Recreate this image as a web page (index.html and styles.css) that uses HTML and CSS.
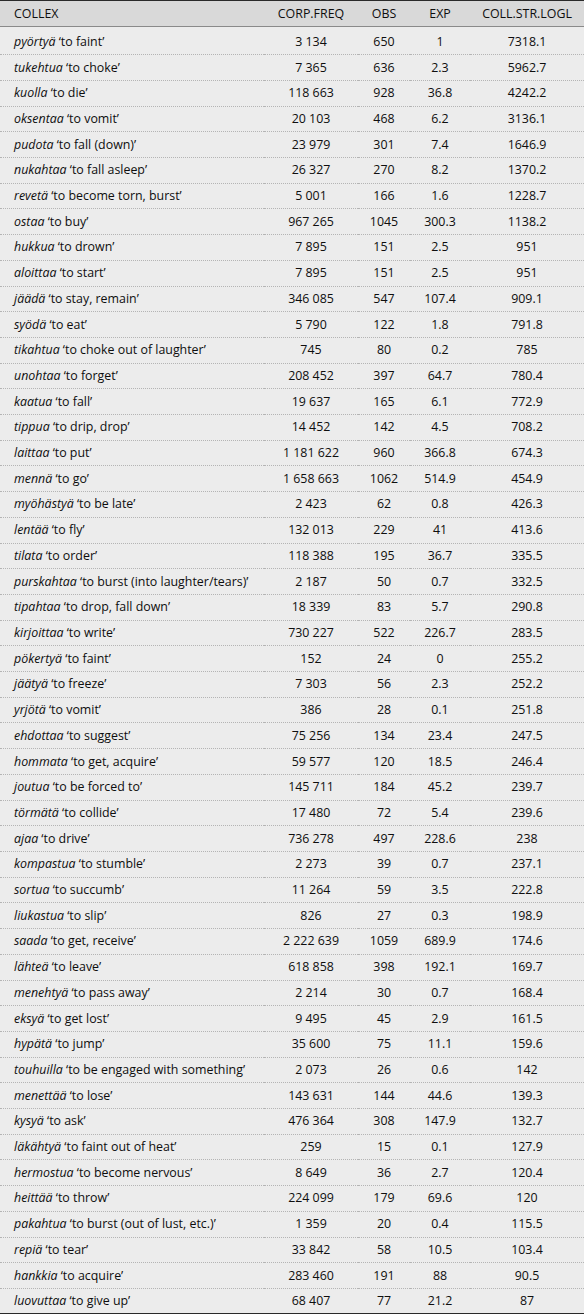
FILE: index.html
```html
<!DOCTYPE html>
<html lang="en">
<head>
<meta charset="utf-8">
<title>Collexemes</title>
<link rel="stylesheet" href="styles.css">
</head>
<body>
<table class="tbl">
<colgroup>
<col class="c-lex"><col class="c-freq"><col class="c-obs"><col class="c-exp"><col class="c-str">
</colgroup>
<thead>
<tr><th class="lex">COLLEX</th><th>CORP.FREQ</th><th>OBS</th><th>EXP</th><th>COLL.STR.LOGL</th></tr>
</thead>
<tbody>
<tr class="first"><td class="lex"><i>pyörtyä</i> ‘to faint’</td><td>3 134</td><td>650</td><td>1</td><td>7318.1</td></tr>
<tr><td class="lex"><i>tukehtua</i> ‘to choke’</td><td>7 365</td><td>636</td><td>2.3</td><td>5962.7</td></tr>
<tr><td class="lex"><i>kuolla</i> ‘to die’</td><td>118 663</td><td>928</td><td>36.8</td><td>4242.2</td></tr>
<tr><td class="lex"><i>oksentaa</i> ‘to vomit’</td><td>20 103</td><td>468</td><td>6.2</td><td>3136.1</td></tr>
<tr><td class="lex"><i>pudota</i> ‘to fall (down)’</td><td>23 979</td><td>301</td><td>7.4</td><td>1646.9</td></tr>
<tr><td class="lex"><i>nukahtaa</i> ‘to fall asleep’</td><td>26 327</td><td>270</td><td>8.2</td><td>1370.2</td></tr>
<tr><td class="lex"><i>revetä</i> ‘to become torn, burst’</td><td>5 001</td><td>166</td><td>1.6</td><td>1228.7</td></tr>
<tr><td class="lex"><i>ostaa</i> ‘to buy’</td><td>967 265</td><td>1045</td><td>300.3</td><td>1138.2</td></tr>
<tr><td class="lex"><i>hukkua</i> ‘to drown’</td><td>7 895</td><td>151</td><td>2.5</td><td>951</td></tr>
<tr><td class="lex"><i>aloittaa</i> ‘to start’</td><td>7 895</td><td>151</td><td>2.5</td><td>951</td></tr>
<tr><td class="lex"><i>jäädä</i> ‘to stay, remain’</td><td>346 085</td><td>547</td><td>107.4</td><td>909.1</td></tr>
<tr><td class="lex"><i>syödä</i> ‘to eat’</td><td>5 790</td><td>122</td><td>1.8</td><td>791.8</td></tr>
<tr><td class="lex"><i>tikahtua</i> ‘to choke out of laughter’</td><td>745</td><td>80</td><td>0.2</td><td>785</td></tr>
<tr><td class="lex"><i>unohtaa</i> ‘to forget’</td><td>208 452</td><td>397</td><td>64.7</td><td>780.4</td></tr>
<tr><td class="lex"><i>kaatua</i> ‘to fall’</td><td>19 637</td><td>165</td><td>6.1</td><td>772.9</td></tr>
<tr><td class="lex"><i>tippua</i> ‘to drip, drop’</td><td>14 452</td><td>142</td><td>4.5</td><td>708.2</td></tr>
<tr><td class="lex"><i>laittaa</i> ‘to put’</td><td>1 181 622</td><td>960</td><td>366.8</td><td>674.3</td></tr>
<tr><td class="lex"><i>mennä</i> ‘to go’</td><td>1 658 663</td><td>1062</td><td>514.9</td><td>454.9</td></tr>
<tr><td class="lex"><i>myöhästyä</i> ‘to be late’</td><td>2 423</td><td>62</td><td>0.8</td><td>426.3</td></tr>
<tr><td class="lex"><i>lentää</i> ‘to fly’</td><td>132 013</td><td>229</td><td>41</td><td>413.6</td></tr>
<tr><td class="lex"><i>tilata</i> ‘to order’</td><td>118 388</td><td>195</td><td>36.7</td><td>335.5</td></tr>
<tr><td class="lex"><i>purskahtaa</i> ‘to burst (into laughter/tears)’</td><td>2 187</td><td>50</td><td>0.7</td><td>332.5</td></tr>
<tr><td class="lex"><i>tipahtaa</i> ‘to drop, fall down’</td><td>18 339</td><td>83</td><td>5.7</td><td>290.8</td></tr>
<tr><td class="lex"><i>kirjoittaa</i> ‘to write’</td><td>730 227</td><td>522</td><td>226.7</td><td>283.5</td></tr>
<tr><td class="lex"><i>pökertyä</i> ‘to faint’</td><td>152</td><td>24</td><td>0</td><td>255.2</td></tr>
<tr><td class="lex"><i>jäätyä</i> ‘to freeze’</td><td>7 303</td><td>56</td><td>2.3</td><td>252.2</td></tr>
<tr><td class="lex"><i>yrjötä</i> ‘to vomit’</td><td>386</td><td>28</td><td>0.1</td><td>251.8</td></tr>
<tr><td class="lex"><i>ehdottaa</i> ‘to suggest’</td><td>75 256</td><td>134</td><td>23.4</td><td>247.5</td></tr>
<tr><td class="lex"><i>hommata</i> ‘to get, acquire’</td><td>59 577</td><td>120</td><td>18.5</td><td>246.4</td></tr>
<tr><td class="lex"><i>joutua</i> ‘to be forced to’</td><td>145 711</td><td>184</td><td>45.2</td><td>239.7</td></tr>
<tr><td class="lex"><i>törmätä</i> ‘to collide’</td><td>17 480</td><td>72</td><td>5.4</td><td>239.6</td></tr>
<tr><td class="lex"><i>ajaa</i> ‘to drive’</td><td>736 278</td><td>497</td><td>228.6</td><td>238</td></tr>
<tr><td class="lex"><i>kompastua</i> ‘to stumble’</td><td>2 273</td><td>39</td><td>0.7</td><td>237.1</td></tr>
<tr><td class="lex"><i>sortua</i> ‘to succumb’</td><td>11 264</td><td>59</td><td>3.5</td><td>222.8</td></tr>
<tr><td class="lex"><i>liukastua</i> ‘to slip’</td><td>826</td><td>27</td><td>0.3</td><td>198.9</td></tr>
<tr><td class="lex"><i>saada</i> ‘to get, receive’</td><td>2 222 639</td><td>1059</td><td>689.9</td><td>174.6</td></tr>
<tr><td class="lex"><i>lähteä</i> ‘to leave’</td><td>618 858</td><td>398</td><td>192.1</td><td>169.7</td></tr>
<tr><td class="lex"><i>menehtyä</i> ‘to pass away’</td><td>2 214</td><td>30</td><td>0.7</td><td>168.4</td></tr>
<tr><td class="lex"><i>eksyä</i> ‘to get lost’</td><td>9 495</td><td>45</td><td>2.9</td><td>161.5</td></tr>
<tr><td class="lex"><i>hypätä</i> ‘to jump’</td><td>35 600</td><td>75</td><td>11.1</td><td>159.6</td></tr>
<tr><td class="lex"><i>touhuilla</i> ‘to be engaged with something’</td><td>2 073</td><td>26</td><td>0.6</td><td>142</td></tr>
<tr><td class="lex"><i>menettää</i> ‘to lose’</td><td>143 631</td><td>144</td><td>44.6</td><td>139.3</td></tr>
<tr><td class="lex"><i>kysyä</i> ‘to ask’</td><td>476 364</td><td>308</td><td>147.9</td><td>132.7</td></tr>
<tr><td class="lex"><i>läkähtyä</i> ‘to faint out of heat’</td><td>259</td><td>15</td><td>0.1</td><td>127.9</td></tr>
<tr><td class="lex"><i>hermostua</i> ‘to become nervous’</td><td>8 649</td><td>36</td><td>2.7</td><td>120.4</td></tr>
<tr><td class="lex"><i>heittää</i> ‘to throw’</td><td>224 099</td><td>179</td><td>69.6</td><td>120</td></tr>
<tr><td class="lex"><i>pakahtua</i> ‘to burst (out of lust, etc.)’</td><td>1 359</td><td>20</td><td>0.4</td><td>115.5</td></tr>
<tr><td class="lex"><i>repiä</i> ‘to tear’</td><td>33 842</td><td>58</td><td>10.5</td><td>103.4</td></tr>
<tr><td class="lex"><i>hankkia</i> ‘to acquire’</td><td>283 460</td><td>191</td><td>88</td><td>90.5</td></tr>
<tr><td class="lex"><i>luovuttaa</i> ‘to give up’</td><td>68 407</td><td>77</td><td>21.2</td><td>87</td></tr>
</tbody>
</table>
</body>
</html>
```

FILE: styles.css
```css
html, body {
  margin: 0;
  padding: 0;
  background: #ececec;
}
.tbl {
  width: 584px;
  border-collapse: collapse;
  table-layout: fixed;
  font-family: "Open Sans", "Liberation Sans", sans-serif;
  font-size: 12.4px;
  line-height: 16px;
  color: #0e0e0e;
  background: #ececec;
  border-top: 1px solid #2a2a2a;
  border-bottom: 3px solid #2a2a2a;
}
.c-lex { width: 264px; }
.c-freq { width: 94px; }
.c-obs { width: 52px; }
.c-exp { width: 60px; }
.c-str { width: 114px; }
.tbl thead tr {
  height: 26px;
}
.tbl th {
  background: #d9d9d9;
  font-weight: normal;
  padding: 0;
  text-align: center;
  border-bottom: 1px solid #8a8a8a;
  vertical-align: middle;
}
.tbl tbody tr {
  height: 25.71px;
}
.tbl td {
  padding: 0;
  text-align: center;
  vertical-align: middle;
  border-bottom: 1px dotted #b4b4b4;
  white-space: nowrap;
}
.tbl tbody tr.first {
  height: 28.2px;
}
.tbl tr.first td {
  padding-top: 3px;
}
.tbl tbody tr:last-child td {
  border-bottom: none;
}
.tbl .lex {
  text-align: left;
  padding-left: 14px;
}
```
